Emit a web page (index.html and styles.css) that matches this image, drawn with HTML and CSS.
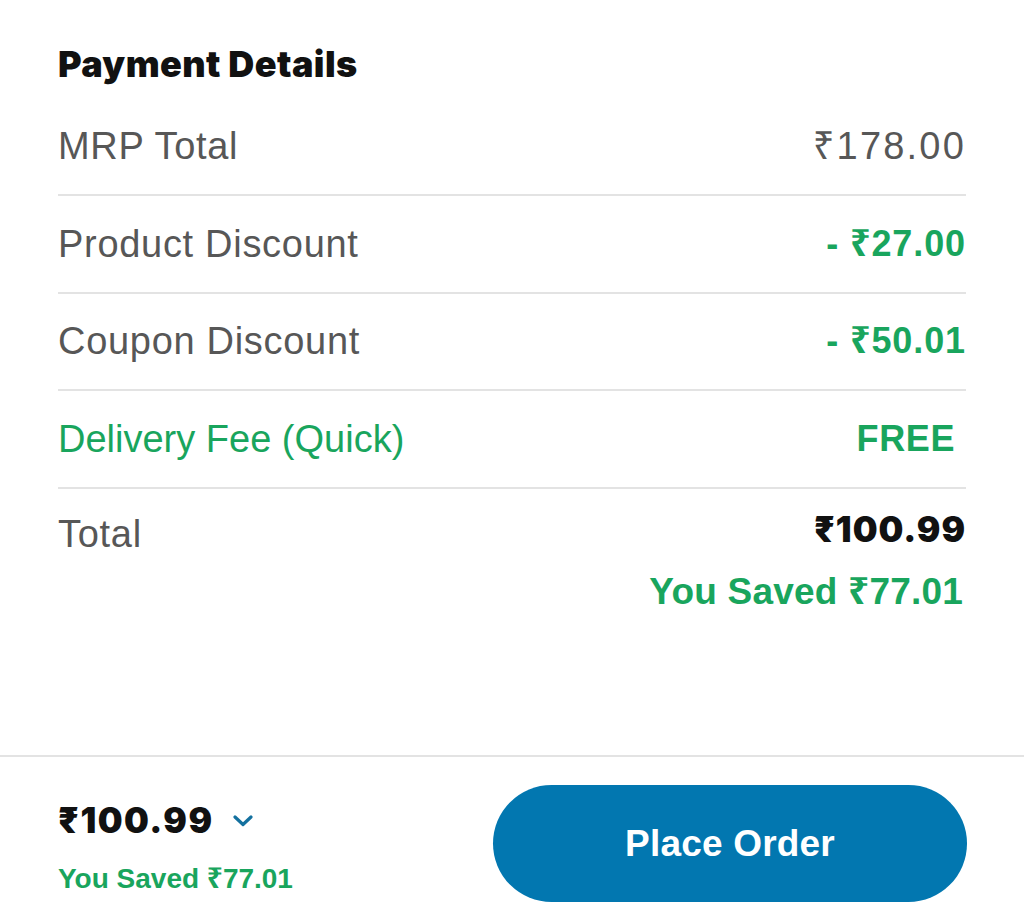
FILE: index.html
```html
<!DOCTYPE html>
<html lang="en">
<head>
<meta charset="utf-8">
<title>Payment Details</title>
<link rel="stylesheet" href="styles.css">
</head>
<body>
<div class="page">
  <main class="details">
    <h1 class="title">Payment Details</h1>
    <div class="row">
      <span class="label">MRP Total</span>
      <span class="value">₹178.00</span>
    </div>
    <div class="row">
      <span class="label">Product Discount</span>
      <span class="value discount">- ₹27.00</span>
    </div>
    <div class="row">
      <span class="label">Coupon Discount</span>
      <span class="value discount">- ₹50.01</span>
    </div>
    <div class="row">
      <span class="label green">Delivery Fee (Quick)</span>
      <span class="value discount free">FREE</span>
    </div>
    <div class="row total-row">
      <span class="label total-label">Total</span>
      <div class="total-values">
        <span class="total-amount">₹100.99</span>
        <span class="saved">You Saved ₹77.01</span>
      </div>
    </div>
  </main>
  <footer class="bar">
    <div class="bar-left">
      <div class="bar-price">
        <span class="bar-amount">₹100.99</span>
        <svg class="chevron" width="20" height="12" viewBox="0 0 20 12" aria-hidden="true">
          <path d="M2 2 L10 9.5 L18 2" fill="none" stroke="#14719f" stroke-width="3.2" stroke-linecap="round" stroke-linejoin="round"/>
        </svg>
      </div>
      <span class="bar-saved">You Saved ₹77.01</span>
    </div>
    <button class="order-btn">Place Order</button>
  </footer>
</div>
</body>
</html>
```

FILE: styles.css
```css
html, body {
  margin: 0;
  padding: 0;
  background: #ffffff;
}

body {
  font-family: "Liberation Sans", "Noto Sans", Arial, sans-serif;
  color: #575757;
}

.page {
  height: 909px;
  display: flex;
  flex-direction: column;
}

.details {
  flex: 1;
  padding: 0 58px;
}

.title {
  margin: 0;
  padding: 42px 0 12.3px;
  height: 44px;
  font-family: "Inter", "Liberation Sans", sans-serif;
  font-weight: 900;
  font-size: 36px;
  line-height: 44px;
  color: #111111;
  letter-spacing: 0.4px;
}

.row {
  display: flex;
  justify-content: space-between;
  align-items: center;
  height: 95.67px;
  border-bottom: 2px solid #e3e3e3;
  font-size: 38px;
  line-height: 44px;
  letter-spacing: 0.7px;
}

.label {
  color: #575757;
}

.green {
  color: #19a55d;
  letter-spacing: 0;
}

.value {
  color: #575757;
  letter-spacing: 2.2px;
}

.discount {
  color: #19a55d;
  font-weight: bold;
  font-size: 36px;
  letter-spacing: 0.9px;
}

.free {
  padding-right: 11px;
  letter-spacing: 0.6px;
}

.total-row {
  border-bottom: none;
  align-items: flex-start;
  height: auto;
  padding-top: 18px;
}

.total-label {
  margin-top: 5.5px;
}

.total-values {
  display: flex;
  flex-direction: column;
  align-items: flex-end;
}

.total-amount {
  font-family: "Inter", "Liberation Sans", sans-serif;
  font-weight: 900;
  font-size: 35px;
  line-height: 44px;
  color: #111111;
  letter-spacing: 1px;
}

.saved {
  margin-top: 19px;
  margin-right: 3px;
  font-weight: bold;
  font-size: 37px;
  line-height: 44px;
  letter-spacing: 0.2px;
  color: #19a55d;
}

.bar {
  border-top: 2px solid #e3e3e3;
  height: 152px;
  display: flex;
  justify-content: space-between;
  align-items: flex-start;
  padding: 0 57px 0 58px;
}

.bar-left {
  display: flex;
  flex-direction: column;
  padding-top: 43px;
}

.bar-price {
  display: flex;
  align-items: center;
  gap: 19px;
  height: 40px;
}

.bar-amount {
  font-family: "Inter", "Liberation Sans", sans-serif;
  font-weight: 900;
  font-size: 35px;
  line-height: 40px;
  letter-spacing: 1.5px;
  color: #111111;
}

.chevron {
  display: block;
  margin-top: 1px;
}

.bar-saved {
  margin-top: 21.5px;
  font-weight: bold;
  font-size: 28px;
  line-height: 34px;
  color: #19a55d;
}

.order-btn {
  margin-top: 28px;
  width: 474px;
  height: 117px;
  border: none;
  border-radius: 58.5px;
  background: #0277b0;
  color: #ffffff;
  font-family: "Liberation Sans", "Noto Sans", Arial, sans-serif;
  font-weight: bold;
  font-size: 37px;
  letter-spacing: 0.2px;
  padding: 0;
}
```
